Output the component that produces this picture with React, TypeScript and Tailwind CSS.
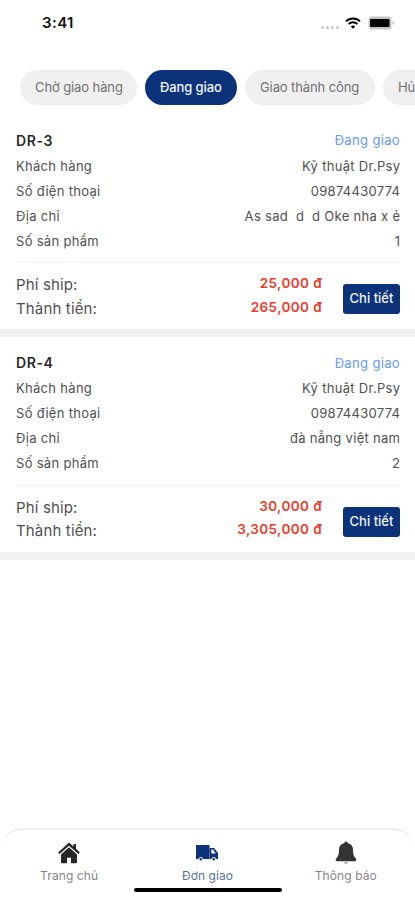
import clsx from "clsx";

type Order = {
  code: string;
  status: string;
  details: { label: string; value: string }[];
  shipping: string;
  total: string;
};

const tabs = [
  { label: "Chờ giao hàng", width: "w-[117px]" },
  { label: "Đang giao", width: "w-[92px]" },
  { label: "Giao thành công", width: "w-[130px]" },
  { label: "Hủy", width: "w-[84px]" },
];

const orders: Order[] = [
  {
    code: "DR-3",
    status: "Đang giao",
    details: [
      { label: "Khách hàng", value: "Kỹ thuật Dr.Psy" },
      { label: "Số điện thoại", value: "09874430774" },
      { label: "Địa chỉ", value: "As sad  d  d Oke nha x ẻ" },
      { label: "Số sản phẩm", value: "1" },
    ],
    shipping: "25,000 đ",
    total: "265,000 đ",
  },
  {
    code: "DR-4",
    status: "Đang giao",
    details: [
      { label: "Khách hàng", value: "Kỹ thuật Dr.Psy" },
      { label: "Số điện thoại", value: "09874430774" },
      { label: "Địa chỉ", value: "đà nẵng việt nam" },
      { label: "Số sản phẩm", value: "2" },
    ],
    shipping: "30,000 đ",
    total: "3,305,000 đ",
  },
];

const StatusBar = () => (
  <header className="flex h-[46px] items-center justify-between pl-[42px] pr-[20px]">
    <span className="pt-px text-[15px] font-semibold tracking-[0.4px] text-[#111]">
      3:41
    </span>
    <div className="flex items-center">
      <div className="mr-[6px] mt-[8px] flex gap-[2px]">
        {[0, 1, 2, 3].map((dot) => (
          <span key={dot} className="size-[3px] rounded-full bg-[#c8c8c8]" />
        ))}
      </div>
      <svg width="16" height="12" viewBox="0 0 16 12" fill="none" stroke="#000">
        <path d="M1 4.4a10 10 0 0 1 14 0" strokeWidth="2" />
        <path d="M3.6 7.1a6.2 6.2 0 0 1 8.8 0" strokeWidth="1.9" />
        <path d="M8 11.8 5.8 9.5a3.1 3.1 0 0 1 4.4 0z" fill="#000" stroke="none" />
      </svg>
      <svg className="ml-[7px]" width="27" height="14" viewBox="0 0 27 14">
        <rect x=".5" y=".5" width="23" height="13" rx="3.5" fill="#c4c4c4" />
        <rect x="2" y="3" width="19.5" height="8" rx="1" fill="#000" />
        <path d="M24.6 5c2 .7 2 3.3 0 4z" fill="#bdbdbd" />
      </svg>
    </div>
  </header>
);

const OrderCard = ({ order }: { order: Order }) => (
  <article className="border-b-[8px] border-[#f1f1f1] pl-[16px] pr-[15px]">
    <div className="flex h-[26.5px] items-center justify-between">
      <h2 className="-mt-[1.5px] text-[14px] font-semibold tracking-[0.6px] text-[#2a2a2a]">
        {order.code}
      </h2>
      <span className="text-[13px] tracking-[0.35px] text-[#6699f5]">
        {order.status}
      </span>
    </div>
    <dl className="border-b border-[#f3f3f3] pb-[8px] text-[13px] tracking-[0.3px] text-[#505050]">
      {order.details.map(({ label, value }) => (
        <div key={label} className="flex h-[25px] items-center justify-between">
          <dt>{label}</dt>
          <dd className="-mr-[0.3px] whitespace-pre">{value}</dd>
        </div>
      ))}
    </dl>
    <div className="flex h-[66px] items-center">
      <div className="mt-px flex-1 text-[15px] leading-[23.5px] tracking-[0.15px] text-[#505050]">
        <p>Phí ship:</p>
        <p>Thành tiền:</p>
      </div>
      <div className="mb-[1px] text-right text-[13.5px] font-semibold leading-[23.5px] tracking-[0.4px] text-[#ee3a2a]">
        <p>{order.shipping}</p>
        <p>{order.total}</p>
      </div>
      <button className="ml-[21px] mt-[6px] h-[30px] w-[57px] rounded-[3px] bg-[#0c3279] text-[13px] font-medium text-[#f1f4f9]">
        Chi tiết
      </button>
    </div>
  </article>
);

const HomeIcon = () => (
  <svg width="22" height="22" viewBox="0 0 22 22" fill="#262626">
    <path d="M11 .4 15.4 4.4V2H18v4.7l3.9 3.7-1.5 1.7L11 3.800l-9.400 8.300L.1 10.400z" />
    <path d="m11 5.300 8 7.100v7.800q0 1.100-1.100 1.100H13v-5.500H9v5.500H4.100Q3 21.300 3 20.200v-7.800z" />
  </svg>
);

const TruckIcon = () => (
  <svg width="22" height="22" viewBox="0 0 22 22" fill="#0c3279">
    <path d="M0 3h13.500v14H0z" />
    <path
      fillRule="evenodd"
      d="M13.500 6h4.500l4 5v6h-8.500zm1.800 1.500v4h4.500L17 7.500z"
    />
    <circle cx="4.800" cy="17.200" r="1.800" stroke="#fff" strokeWidth="1" />
    <circle cx="17.800" cy="17.200" r="1.800" stroke="#fff" strokeWidth="1" />
  </svg>
);

const BellIcon = () => (
  <svg width="22" height="24" viewBox="0 0 22 24" fill="#333">
    <path d="M11 .5q1.700 0 1.700 1.600c3.300.9 5.300 3.200 5.300 6.400 0 4.500.7 6.800 3 9.300.7 1.300.1 2.400-1 2.400H2c-1.100 0-1.700-1.100-1-2.400 2.300-2.500 3-4.800 3-9.300 0-3.200 2-5.500 5.300-6.400Q9.300.5 11 .5z" />
    <path d="M9 21h4q-.4 2-2 2t-2-2z" fill="#aaa" />
  </svg>
);

const navItems = [
  { label: "Trang chủ", icon: HomeIcon },
  { label: "Đơn giao", icon: TruckIcon, active: true },
  { label: "Thông báo", icon: BellIcon },
];

export default function App() {
  return (
    <div className="flex h-[900px] w-[415px] flex-col overflow-hidden bg-white font-['Inter','Liberation_Sans',sans-serif]">
      <StatusBar />
      <nav className="mt-[24px] flex gap-[8px] overflow-hidden pl-[20px]">
        {tabs.map(({ label, width }, index) => (
          <button
            key={label}
            className={clsx(
              "h-[35px] shrink-0 whitespace-nowrap rounded-full px-[15px] text-left text-[13px]",
              width,
              index === 1
                ? "bg-[#0c3279] font-medium tracking-[-0.1px] text-[#f1f4f9]"
                : "bg-[#f0f0f0] tracking-[-0.1px] text-[#707070]",
            )}
          >
            {label}
          </button>
        ))}
      </nav>
      <main className="mt-[22.5px] flex flex-1 flex-col gap-[13px]">
        {orders.map((order) => (
          <OrderCard key={order.code} order={order} />
        ))}
      </main>
      <footer className="relative h-[72px] rounded-t-[22px] border-t-2 border-[#eee] bg-white">
        <div className="flex">
          {navItems.map(({ label, icon: Icon, active }) => (
            <button key={label} className="flex flex-1 flex-col items-center pt-[11px]">
              <span className="flex h-[24px] items-center">
                <Icon />
              </span>
              <span
                className={clsx(
                  "mt-[2px] text-[12px] leading-[18px]",
                  active
                    ? "tracking-[0.05px] text-[#5a6f9c]"
                    : "tracking-[0.1px] text-[#858585]",
                )}
              >
                {label}
              </span>
            </button>
          ))}
        </div>
        <div className="absolute bottom-[8px] left-[134px] h-[4px] w-[148px] rounded-full bg-black" />
      </footer>
    </div>
  );
}
